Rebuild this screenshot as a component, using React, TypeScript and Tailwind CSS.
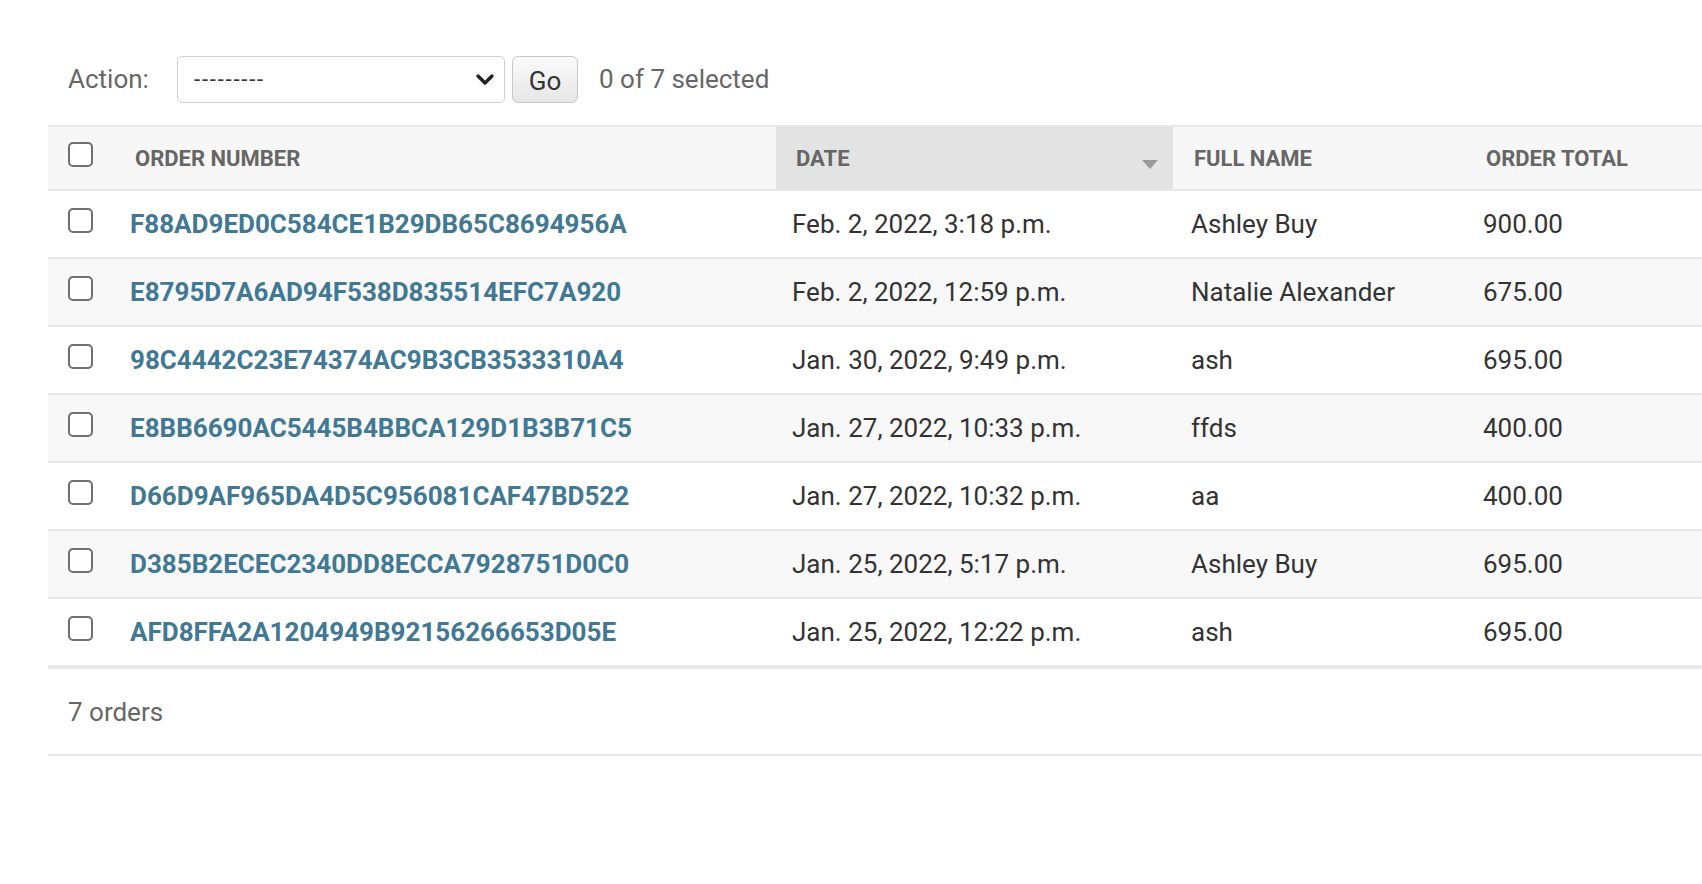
import React from 'react'

interface Order {
  number: string
  date: string
  name: string
  total: string
}

const ORDERS: Order[] = [
  { number: 'F88AD9ED0C584CE1B29DB65C8694956A', date: 'Feb. 2, 2022, 3:18 p.m.', name: 'Ashley Buy', total: '900.00' },
  { number: 'E8795D7A6AD94F538D835514EFC7A920', date: 'Feb. 2, 2022, 12:59 p.m.', name: 'Natalie Alexander', total: '675.00' },
  { number: '98C4442C23E74374AC9B3CB3533310A4', date: 'Jan. 30, 2022, 9:49 p.m.', name: 'ash', total: '695.00' },
  { number: 'E8BB6690AC5445B4BBCA129D1B3B71C5', date: 'Jan. 27, 2022, 10:33 p.m.', name: 'ffds', total: '400.00' },
  { number: 'D66D9AF965DA4D5C956081CAF47BD522', date: 'Jan. 27, 2022, 10:32 p.m.', name: 'aa', total: '400.00' },
  { number: 'D385B2ECEC2340DD8ECCA7928751D0C0', date: 'Jan. 25, 2022, 5:17 p.m.', name: 'Ashley Buy', total: '695.00' },
  { number: 'AFD8FFA2A1204949B92156266653D05E', date: 'Jan. 25, 2022, 12:22 p.m.', name: 'ash', total: '695.00' },
]

const COLS = 'grid grid-cols-[65px_663px_397px_292px_1fr]'

function Box() {
  return <span className="block -mt-[7px] w-[25px] h-[25px] rounded-[5px] border-2 border-[#6f6f6f] bg-white" />
}

export default function App() {
  return (
    <div className="h-screen overflow-hidden bg-white font-[Roboto,sans-serif] text-[#333] pl-[48px] pt-[56px]">
      {/* actions */}
      <div className="flex items-center h-[47px] pl-[20px]">
        <span className="text-[26px] text-[#666] w-[109px]">Action:</span>
        <div className="relative w-[328px] h-[47px] border border-[#cfcfcf] rounded-[5px] bg-white flex items-center pl-[16px]">
          <span className="text-[22px] text-[#333] tracking-[1.8px]">---------</span>
          <svg className="absolute right-[9px] top-[15px]" width="20" height="16" viewBox="0 0 20 16">
            <path d="M3 4 L10 11 L17 4" fill="none" stroke="#222" strokeWidth="3.4" strokeLinecap="round" strokeLinejoin="round" />
          </svg>
        </div>
        <button className="ml-[7px] w-[66px] h-[47px] rounded-[6px] border border-[#c8c8c8] bg-gradient-to-b from-[#fafafa] to-[#e6e6e6] text-[26px] text-[#333] pt-[3px]">
          Go
        </button>
        <span className="ml-[21px] text-[26px] text-[#666]">0 of 7 selected</span>
      </div>

      {/* results */}
      <div className="mt-[22px] border-t-2 border-[#e8e8e8]">
        <div className={`${COLS} h-[64px] bg-[#f7f7f7] border-b-2 border-[#e8e8e8] text-[22px] font-bold text-[#666] uppercase`}>
          <div className="flex items-center pl-[20px]"><Box /></div>
          <div className="flex items-center pl-[22px]">Order number</div>
          <div className="relative flex items-center pl-[20px] bg-[#e3e3e3]">
            Date
            <svg className="absolute right-[15px] top-[33px]" width="16" height="9" viewBox="0 0 16 9">
              <path d="M0 0 H16 L8 9 Z" fill="#999" />
            </svg>
          </div>
          <div className="flex items-center pl-[21px]">Full name</div>
          <div className="flex items-center pl-[21px]">Order total</div>
        </div>

        {ORDERS.map((o, i) => {
          const last = i === ORDERS.length - 1
          return (
            <div
              key={o.number}
              className={`${COLS} text-[26px] ${last ? 'h-[66px]' : 'h-[68px] border-b-2 border-[#e8e8e8]'} ${i % 2 === 1 ? 'bg-[#f8f8f8]' : 'bg-white'}`}
            >
              <div className="flex items-center pl-[20px]"><Box /></div>
              <div className="flex items-center pl-[17px]">
                <a href="#" className="font-bold text-[#417893]">{o.number}</a>
              </div>
              <div className="flex items-center pl-[16px]">{o.date}</div>
              <div className="flex items-center pl-[18px]">{o.name}</div>
              <div className="flex items-center pl-[18px]">{o.total}</div>
            </div>
          )
        })}
        <div className="h-[4px] bg-[#e8e8e8]" />

        <div className="h-[87px] flex items-center pl-[20px] pt-[1px] border-b-2 border-[#e8e8e8] text-[26px] text-[#666]">
          7 orders
        </div>
      </div>
    </div>
  )
}
